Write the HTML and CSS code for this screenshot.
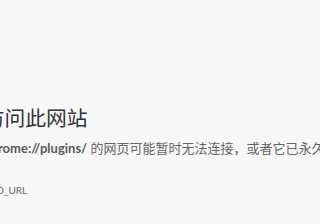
FILE: index.html
```html
<!DOCTYPE html>
<html lang="zh-CN">
<head>
  <meta charset="UTF-8">
  <meta name="viewport" content="width=device-width, initial-scale=1.0">
  <title>chrome://plugins/</title>
  <link rel="stylesheet" href="styles.css">
</head>
<body>
  <div class="wrapper">
    <h1 class="heading">无法访问此网站</h1>
    <p class="summary">网址为 <strong>chrome://plugins/</strong> 的网页可能暂时无法连接，或者它已永久性地移动到了新网址。</p>
    <div class="error-code">ERR_INVALID_URL</div>
  </div>
</body>
</html>
```

FILE: styles.css
```css
body {
  margin: 0;
  background: #f7f7f7;
  color: #646464;
  font-family: "Lato", "Noto Sans CJK SC", sans-serif;
  font-size: 13px;
  overflow: hidden;
}

.wrapper {
  margin-left: -58px;
  padding-top: 105px;
  width: 600px;
}

.heading {
  margin: 0 0 7px;
  color: #333;
  font-size: 1.6em;
  font-weight: normal;
  line-height: 1.25em;
}

.summary {
  margin: 0;
  line-height: 1.6em;
  white-space: nowrap;
}

.summary strong {
  color: #5a5a5a;
}

.error-code {
  margin-top: 25px;
  font-size: 10px;
  color: #646464;
}
```
